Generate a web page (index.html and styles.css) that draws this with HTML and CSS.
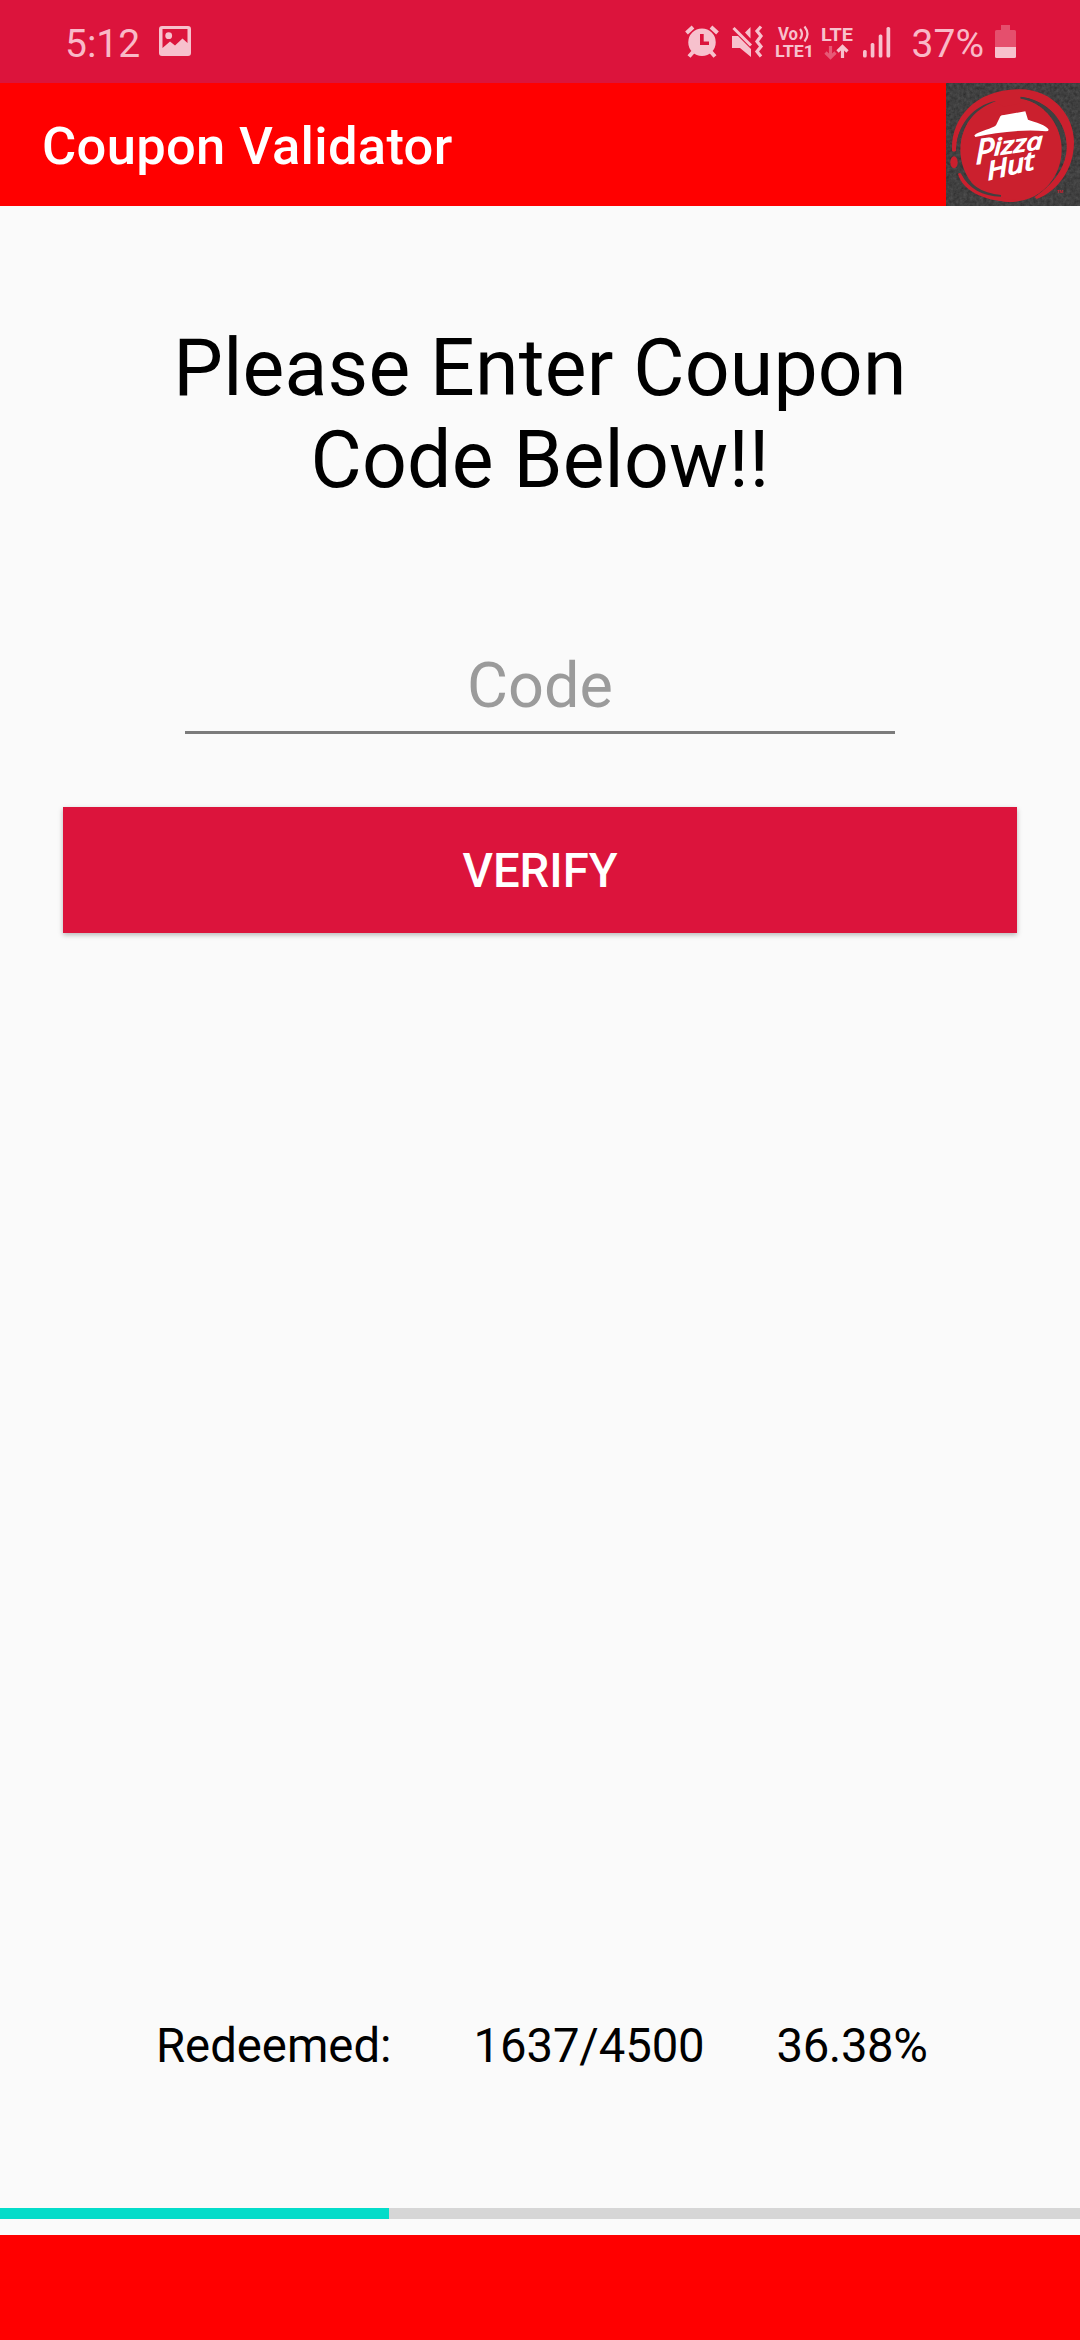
FILE: index.html
```html
<!DOCTYPE html>
<html lang="en">
<head>
<meta charset="utf-8">
<title>Coupon Validator</title>
<link rel="stylesheet" href="styles.css">
</head>
<body>
<div class="screen">
  <div class="status">
    <span class="clock">5:12</span>
    <svg class="picture" width="32" height="30" viewBox="0 0 32 30"><path fill-rule="evenodd" d="M3 0H29Q32 0 32 3V27Q32 30 29 30H3Q0 30 0 27V3Q0 0 3 0ZM3.500 3V22L11 15.500L16 19.500L23.500 12.500L28.500 17V3Z"/><circle cx="9.700" cy="9.700" r="3.400"/></svg>
    <div class="system">
      <svg class="alarm" width="34" height="33" viewBox="684 25 34 33"><g stroke-width="4" fill="none"><path d="M685.500 33L692 27M710 27L716.500 33M692 52L688 56.500M710 52L714 56.500"/></g><path fill-rule="evenodd" d="M701 28.500A13.700 13.700 0 1 1 701 56A13.700 13.700 0 1 1 701 28.500ZM699 34V45H708V41.500H702.700V34Z"/></svg>
      <svg class="mute" width="33" height="33" viewBox="730 25 33 33"><path d="M731 36H737L750 49V57L739 48H731ZM749.500 27V38.500L744 32.500Z"/><path d="M732.500 28L750 45.500" fill="none" stroke-width="3"/><path d="M760 26.500L756 31L760 36L756 41.500L760 46.500L756 51.500L760 56.500" fill="none" stroke-width="3.200"/></svg>
      <svg class="network" width="78" height="38" viewBox="774 23 78 38"><text x="777" y="39.500" font-size="17.500" textLength="20" lengthAdjust="spacingAndGlyphs">Vo</text><path d="M799 29Q803 34 799 39M803.500 26.500Q809.500 34 803.500 41.500" fill="none" stroke-width="2.200"/><text x="774" y="57" font-size="16.800" textLength="39" lengthAdjust="spacingAndGlyphs">LTE1</text><text x="820" y="40.700" font-size="19" textLength="32" lengthAdjust="spacingAndGlyphs">LTE</text><path opacity=".4" d="M829.500 46V57M824.500 52.500L829.500 57.500L834.500 52.500" fill="none" stroke-width="3.200"/><path d="M841.500 58V47.500M836.500 51.500L841.500 46.500L846.500 51.500" fill="none" stroke-width="3.200"/></svg>
      <svg class="signal" width="28" height="31" viewBox="862 27 28 31"><rect x="862" y="50" width="3.700" height="7.500" rx="1.500"/><rect x="869.700" y="43" width="3.700" height="14.500" rx="1.500"/><rect x="877.700" y="34.500" width="3.700" height="23" rx="1.500"/><rect x="885.500" y="27" width="3.700" height="30.500" rx="1.500"/></svg>
      <span class="percent">37%</span>
      <svg class="battery" width="21" height="33" viewBox="0 0 21 33"><path opacity=".34" d="M6 0H15V5H19.500Q21 5 21 6.500V22H0V6.500Q0 5 1.500 5H6Z"/><path d="M0 22H21V31.500Q21 33 19.500 33H1.500Q0 33 0 31.500Z"/></svg>
    </div>
  </div>
  <header class="appbar">
    <h1 class="title">Coupon Validator</h1>
    <svg class="logo" width="134" height="123" viewBox="48 39 402 369" preserveAspectRatio="none">
      <defs><filter id="slate" x="0" y="0" width="1" height="1" color-interpolation-filters="sRGB"><feTurbulence type="fractalNoise" baseFrequency=".1" numOctaves="4" seed="4"/><feColorMatrix values=".16 0 0 0 .17 .16 0 0 0 .17 .16 0 0 0 .17 0 0 0 0 1"/></filter></defs>
      <rect x="48" y="39" width="402" height="369" filter="url(#slate)"/>
      <g fill="#cb202e">
        <ellipse cx="243" cy="239" rx="152" ry="157"/>
        <path d="M66 242C62 150 130 58 270 58C370 58 432 140 432 215C432 300 380 365 320 387L314 381C375 340 412 285 410 225C408 150 350 90 272 80L270 100L220 110L195 94C120 118 80 175 78 242Q72 247 66 242Z"/>
        <ellipse cx="72" cy="277" rx="11" ry="18"/>
        <path d="M84 312Q90 305 97 316C120 355 165 376 213 375V382C230 389 245 390 260 390L250 396C180 396 100 370 84 312Z"/>
        <text x="380" y="369" font-size="13" font-weight="700">TM</text>
      </g>
      <g fill="#404040">
        <path d="M93 296C112 340 155 370 213 375V380C158 379 115 354 95 314Z"/>
        <path d="M197 94C145 112 103 155 88 212L80 220C88 160 130 108 195 93Z"/>
        <path d="M272 81C340 88 394 137 401 200L394 212C383 145 338 96 272 86Z"/>
      </g>
      <path fill="#fff" d="M133 196C150 182 188 176 198 166L211 139Q214 135 222 135L286 124L294 149C315 156 351 166 356 179Q356 184 348 184C280 177 200 187 136 201Z"/>
      <g class="brand" fill="#fff" stroke="#fff" stroke-width="4">
        <text transform="translate(137 283) rotate(-9) skewX(-8)" font-size="100" textLength="57" lengthAdjust="spacingAndGlyphs">P</text>
        <text transform="translate(193 256) rotate(-8) skewX(-8)" font-size="68" textLength="146" lengthAdjust="spacingAndGlyphs">izza</text>
        <text transform="translate(174 331) rotate(-14) skewX(-8)" font-size="74" textLength="144" lengthAdjust="spacingAndGlyphs">Hut</text>
      </g>
    </svg>
  </header>
  <main class="content">
    <h2 class="prompt">Please Enter Coupon<br>Code Below!!</h2>
    <input class="code" type="text" placeholder="Code" aria-label="Code">
    <button class="verify" type="button">VERIFY</button>
    <div class="stats"><span>Redeemed:</span><span class="count">1637/4500</span><span class="rate">36.38%</span></div>
    <div class="progress"><div class="bar" style="width:36.02%"></div></div>
  </main>
  <footer class="bottom"></footer>
</div>
</body>
</html>
```
FILE: styles.css
```css
* { box-sizing: border-box; }
body { margin: 0; background: #fafafa; font-family: Roboto, sans-serif; }
svg { display: block; flex: none; }
.screen { width: 1080px; height: 2340px; display: flex; flex-direction: column; overflow: hidden; }
.status { height: 83px; flex: none; background: #dc143c; color: #f9b9c7; display: flex; align-items: flex-start; padding: 0 64px 0 65px; font-size: 39px; line-height: 46px; }
.status svg { fill: #f7c1cd; stroke: #f7c1cd; stroke-width: 0; }
.clock, .percent { margin-top: 21px; }
.picture { margin: 26px 0 0 19px; }
.system { display: flex; align-items: flex-start; margin-left: auto; }
.alarm { margin-top: 25px; }
.mute { margin: 25px 0 0 12px; }
.network { margin: 23px 0 0 11px; font-weight: 700; }
.signal { margin: 27px 0 0 10px; }
.percent { margin-left: 21px; }
.battery { margin: 25px 0 0 11px; }
.appbar { height: 123px; flex: none; background: #f00; display: flex; align-items: center; justify-content: space-between; padding-left: 42px; }
.title { margin: 0; padding-top: 3px; color: #fff; font-size: 52.5px; line-height: 62px; font-weight: 500; letter-spacing: .3px; }
.brand { font-family: "Open Sans", sans-serif; font-style: italic; font-weight: 500; }
.content { flex: 1; display: flex; flex-direction: column; align-items: center; }
.prompt { margin: 116px 0 0; color: #000; font-size: 78.75px; line-height: 92px; font-weight: 400; text-align: center; letter-spacing: .2px; }
.code { width: 710px; height: 99px; margin: 129px 0 0; padding: 5px 0 0; border: 0; border-bottom: 3px solid #7b7b7b; border-radius: 0; outline: 0; background: none; font: 63px Roboto, sans-serif; text-align: center; }
.code::placeholder { color: #9b9b9b; opacity: 1; }
.verify { width: 954px; height: 126px; margin: 73px 0 0; padding: 2px 0 0; border: 0; background: #dc143c; color: #fff; font: 500 47.25px Roboto, sans-serif; box-shadow: 0 2px 5px rgba(0,0,0,.27); }
.stats { width: 924px; margin: auto 0 134px; padding-left: 78px; display: flex; font-size: 47.25px; line-height: 56px; color: #000; }
.count { margin-left: 82px; letter-spacing: -.1px; }
.rate { margin-left: 72px; letter-spacing: -.4px; }
.progress { width: 100%; height: 11px; margin-bottom: 16px; background: #d6d6d6; }
.bar { height: 100%; background: #04dcc9; }
.bottom { height: 105px; flex: none; background: #f00; }
```
